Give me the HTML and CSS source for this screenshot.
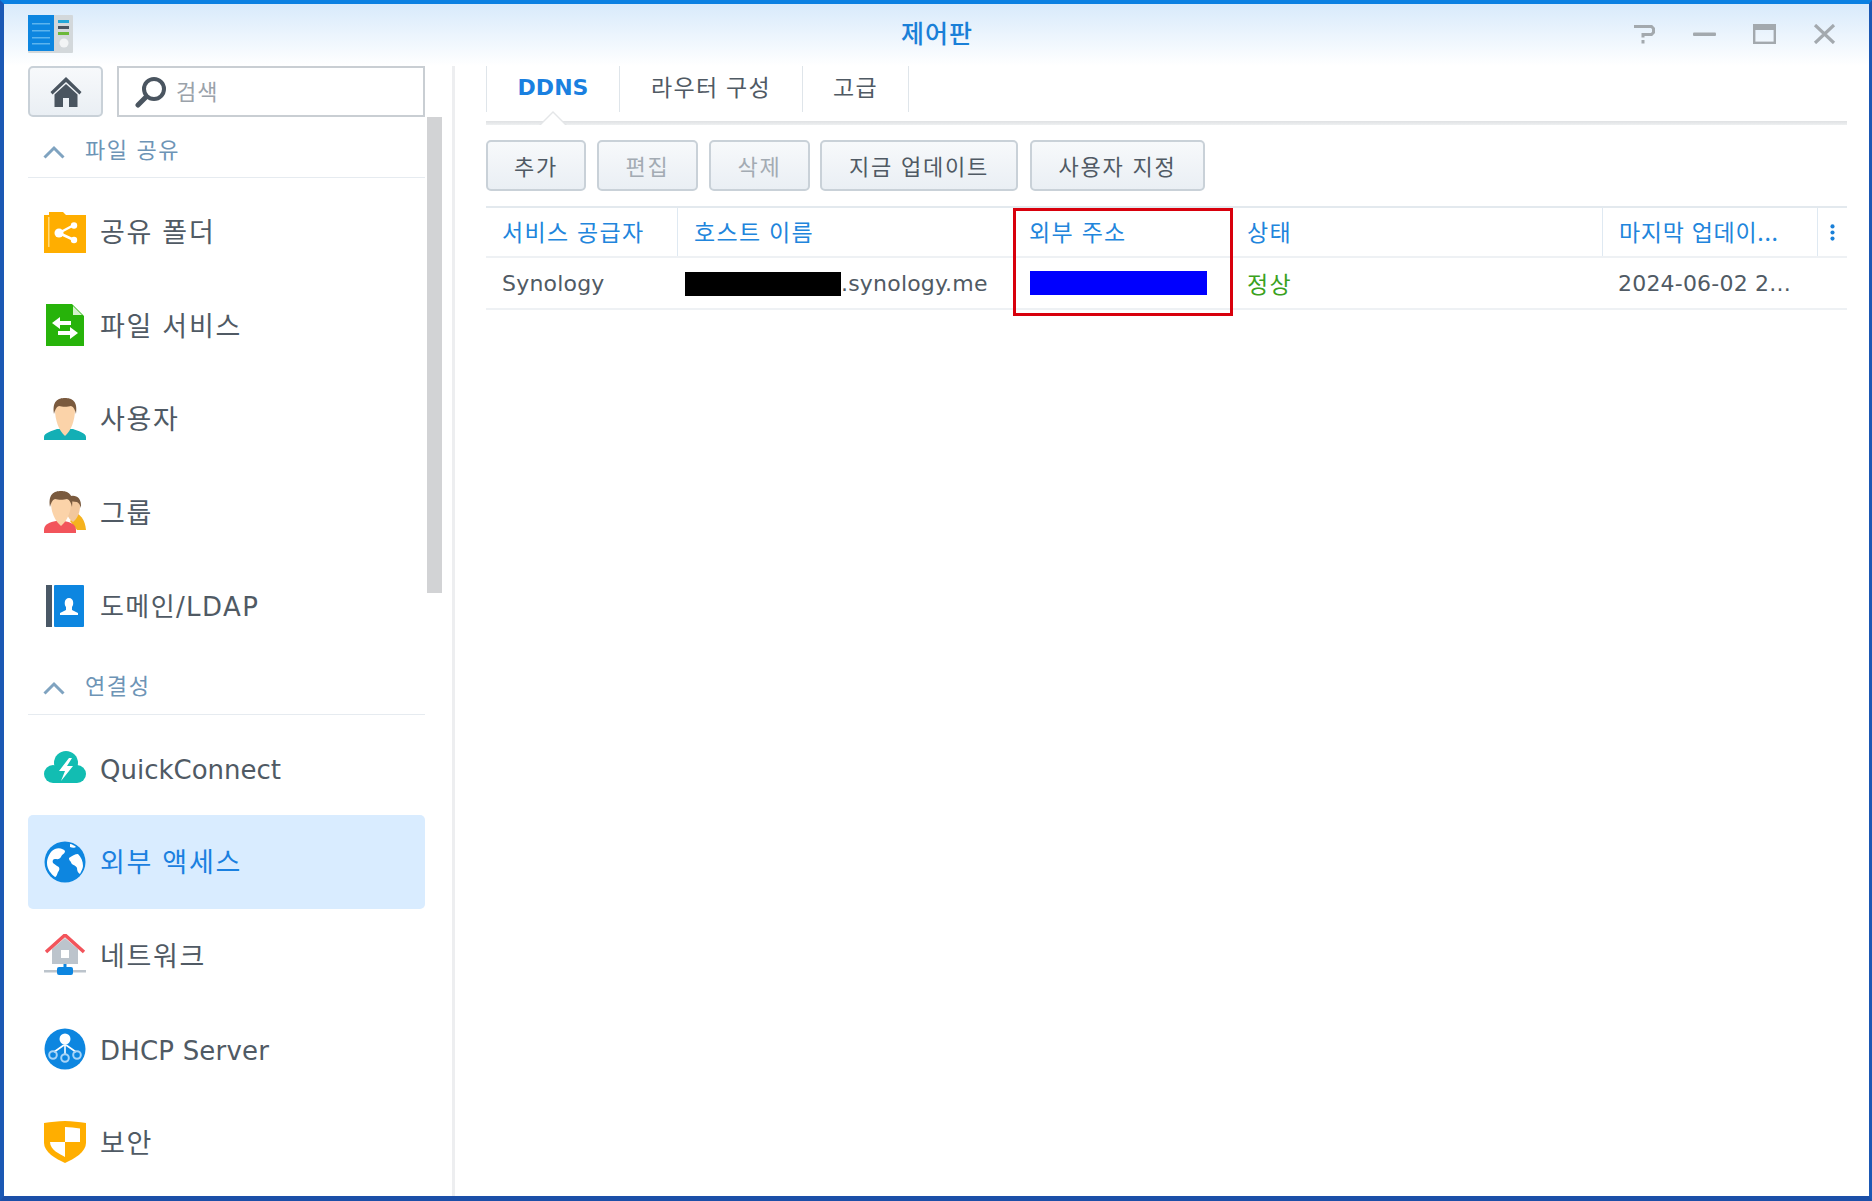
FILE: index.html
```html
<!DOCTYPE html>
<html lang="ko">
<head>
<meta charset="utf-8">
<title>제어판</title>
<link rel="stylesheet" href="styles.css">
</head>
<body>
<div class="window">
  <header class="titlebar">
    <svg class="app-icon" viewBox="0 0 45 38"><rect x="0" y="0" width="45" height="38" rx="1" fill="#d3d8db"/><rect x="0" y="0" width="26" height="36" fill="#0d86e0"/><g fill="#5cb4ee"><rect x="4" y="8" width="18" height="1.500"/><rect x="4" y="15" width="18" height="1.500"/><rect x="4" y="22" width="18" height="1.500"/><rect x="4" y="28" width="18" height="1.500"/></g><rect x="30" y="5" width="11" height="3" fill="#22a6d8"/><rect x="30" y="11" width="11" height="3" fill="#4a5560"/><rect x="30" y="17" width="11" height="3" fill="#6cb83a"/><circle cx="36" cy="28" r="4.500" fill="#f2f4f5"/></svg>
    <h1 class="title">제어판</h1>
    <div class="controls">
      <svg class="ctl" viewBox="0 0 23 20"><path d="M1 2.500h17.500l2 2v4l-2 2H10v3" fill="none" stroke="#a3a9ae" stroke-width="3"/><rect x="8.500" y="16" width="3" height="3.500" fill="#a3a9ae"/></svg>
      <svg class="ctl" viewBox="0 0 23 20"><rect x="0" y="8.500" width="23" height="3.500" rx="1" fill="#a3a9ae"/></svg>
      <svg class="ctl" viewBox="0 0 23 20"><rect x="1.200" y="1.200" width="20.600" height="17.600" fill="none" stroke="#a3a9ae" stroke-width="2.400"/><rect x="1" y="1" width="21" height="5" fill="#a3a9ae"/></svg>
      <svg class="ctl" viewBox="0 0 23 20"><path d="M2 1l19 18M21 1L2 19" fill="none" stroke="#a3a9ae" stroke-width="3.200"/></svg>
    </div>
  </header>
  <div class="body">
    <aside class="sidebar">
      <div class="search-row">
        <button class="btn home-btn"><svg viewBox="0 0 32 32" class="home-icon"><path d="M16 1L0.500 16l2 2.500L16 6l13.500 12.500 2-2.500z" fill="#4a5560"/><path d="M4.500 18.500L16 8l11.500 10.500V31H19v-9h-6v9H4.500z" fill="#4a5560"/></svg></button>
        <div class="search"><svg viewBox="0 0 32 32" class="search-icon"><circle cx="19" cy="13" r="10" fill="none" stroke="#4a5560" stroke-width="4"/><path d="M11 21L3 29" stroke="#4a5560" stroke-width="5" stroke-linecap="round"/></svg><span class="placeholder">검색</span></div>
      </div>
      <div class="scrollbar"></div>
      <div class="section"><svg class="chev" viewBox="0 0 22 14"><path d="M1.500 12.500L11 3l9.500 9.500" fill="none" stroke="#7fa3c0" stroke-width="3"/></svg><span class="section-label">파일 공유</span></div>
      <ul class="nav">
        <li class="item"><svg class="ico" viewBox="0 0 42 42"><path d="M0 4h5V1h14l3 3h20v38H0z" fill="#ffae00"/><rect x="4" y="6" width="1.500" height="30" fill="#ffd97a"/><path d="M15 22L30 14M15 22l15 7" stroke="#fff" stroke-width="2.500"/><circle cx="15" cy="22" r="4.500" fill="#fff"/><circle cx="30" cy="14.500" r="3.200" fill="#fff"/><circle cx="30" cy="29" r="3.200" fill="#fff"/></svg><span class="label">공유 폴더</span></li>
        <li class="item"><svg class="ico" viewBox="0 0 42 42"><path d="M2 0h26l12 12v30H2z" fill="#27b30a"/><path d="M29 2l9 9h-9z" fill="#d5f2cd"/><path d="M8 19l8-6v4h11v4H16v4zM34 29l-8 6v-4H14v-4h12v-4z" fill="#fff"/></svg><span class="label">파일 서비스</span></li>
        <li class="item"><svg class="ico" viewBox="0 0 42 42"><path d="M0 42v-3c0-4 8-6 13-8h16c5 2 13 4 13 8v3z" fill="#13afb5"/><path d="M11 12c0-15 20-15 20 0 0 10-4 21-10 26-6-5-10-16-10-26z" fill="#fbd3a9"/><path d="M10 16C8 3 14 0 21 0s13 3 11 16c-1-4-2-7-5-8-3 1-9 1-12 0-3 1-4 4-5 8z" fill="#7a5a3e"/></svg><span class="label">사용자</span></li>
        <li class="item"><svg class="ico" viewBox="0 0 42 42"><path d="M26 30l8-7c3 2 7 6 8 16h-9z" fill="#f5b21e"/><path d="M24 8c6-3 12 0 12 7 0 7-3 13-7 16-3-2-5-5-6-8z" fill="#f2c79c"/><path d="M24 6c6-3 14-1 13 11-1-3-2-5-4-6-3 0-6-1-8-1z" fill="#7a5a3e"/><path d="M0 42v-3c0-6 6-8 12-9h8c6 1 12 3 12 9v3z" fill="#f2545b"/><path d="M7 12c0-15 20-15 20 0 0 9-4 18-10 23C11 30 7 21 7 12z" fill="#fbd3a9"/><path d="M6 16C4 3 10 0 17 0s13 3 11 16c-1-4-2-7-5-8-3 1-9 1-12 0-3 1-4 4-5 8z" fill="#7a5a3e"/></svg><span class="label">그룹</span></li>
        <li class="item"><svg class="ico" viewBox="0 0 42 42"><rect x="2" y="0" width="6" height="42" fill="#4a5866"/><rect x="10" y="0" width="30" height="42" rx="1" fill="#0d86e0"/><path d="M16 30v-2l6-3v-3c-2-2-2-9 3-9s5 7 3 9v3l6 3v2z" fill="#fff"/></svg><span class="label label-mixed">도메인/LDAP</span></li>
      </ul>
      <div class="section section-next"><svg class="chev" viewBox="0 0 22 14"><path d="M1.500 12.500L11 3l9.500 9.500" fill="none" stroke="#7fa3c0" stroke-width="3"/></svg><span class="section-label">연결성</span></div>
      <ul class="nav">
        <li class="item"><svg class="ico" viewBox="0 0 42 42"><g fill="#12bdb2"><circle cx="22" cy="16" r="12"/><circle cx="9" cy="27" r="9"/><circle cx="33" cy="27" r="9"/><rect x="9" y="20" width="24" height="16"/></g><path d="M25 11l-10 13h6l-4 10 12-15h-6l5-8z" fill="#fff"/></svg><span class="label label-latin">QuickConnect</span></li>
        <li class="item active"><svg class="ico" viewBox="0 0 42 42"><circle cx="21" cy="21" r="20.500" fill="#0d86e0"/><path d="M3 22c0-5 3-12 8-14 4-2 9 0 10 2 0 3-3 3-4 6-2 3-4 2-6 2s-3 2-2 4l4 3c3 1 3 4 1 6-1 3-2 5-3 5-4-3-8-8-8-14zM25 17c3-2 6-4 9-4 3 3 5 7 5 12 0 3-2 5-3 8-2-1-3-3-3-6-1-3-6-3-6-6-2-2-2-3-2-4zM26 3c2 0 5 2 6 3-1 1-4 1-6 0z" fill="#fff"/></svg><span class="label">외부 액세스</span></li>
        <li class="item"><svg class="ico" viewBox="0 0 42 42"><path d="M8 15L21 4l13 11v15H8z" fill="#bcc4cc"/><path d="M2 18L21 1l19 17" fill="none" stroke="#f2545b" stroke-width="3.500"/><rect x="17" y="16" width="8" height="8" fill="#fff"/><rect x="0" y="36" width="42" height="2.500" fill="#bcc4cc"/><rect x="19.500" y="30" width="3" height="5" fill="#0d86e0"/><rect x="13" y="33" width="16" height="8" rx="2" fill="#0d86e0"/></svg><span class="label">네트워크</span></li>
        <li class="item"><svg class="ico" viewBox="0 0 42 42"><circle cx="21" cy="21" r="20.500" fill="#0d86e0"/><circle cx="21" cy="11" r="5.500" fill="#fff"/><path d="M21 14v12M20 17L10 24M22 17l10 7" stroke="#fff" stroke-width="1.600"/><g fill="none" stroke="#a7d4f7" stroke-width="2"><circle cx="9" cy="27" r="3.800"/><circle cx="21" cy="30" r="3.800"/><circle cx="33" cy="27" r="3.800"/></g></svg><span class="label label-latin label-wide">DHCP Server</span></li>
        <li class="item"><svg class="ico" viewBox="0 0 42 42"><path d="M21 0c7 0 14 1 21 2v20c0 9-12 16-21 20C12 38 0 31 0 22V2C7 1 14 0 21 0z" fill="#ffae00"/><path d="M21 6c5 0 10 1 15 1.500V21H21zM21 21v15c-5-3-15-7-15-15z" fill="#fff"/></svg><span class="label">보안</span></li>
      </ul>
    </aside>
    <main class="main">
      <nav class="tabs">
        <span class="tab tab-on">DDNS</span>
        <span class="tab tab-ko tab-router">라우터 구성</span>
        <span class="tab tab-ko tab-adv">고급</span>
      </nav>
      <div class="toolbar">
        <button class="btn tool w-add">추가</button>
        <button class="btn tool w-add2 off">편집</button>
        <button class="btn tool w-add2 off">삭제</button>
        <button class="btn tool w-now">지금 업데이트</button>
        <button class="btn tool w-cust">사용자 지정</button>
      </div>
      <div class="table">
        <div class="row head">
          <div class="cell">서비스 공급자</div>
          <div class="cell sep">호스트 이름</div>
          <div class="cell col-addr">외부 주소</div>
          <div class="cell col-state">상태</div>
          <div class="cell sep col-last">마지막 업데이...</div>
          <div class="cell sep dots"><svg class="dots-icon" viewBox="0 0 4 14"><circle cx="2" cy="2" r="1.700"/><circle cx="2" cy="7" r="1.700"/><circle cx="2" cy="12" r="1.700"/></svg></div>
        </div>
        <div class="row data">
          <div class="cell latin">Synology</div>
          <div class="cell latin host"><span class="mask-black"></span>.synology.me</div>
          <div class="cell"><span class="mask-blue"></span></div>
          <div class="cell col-state ok">정상</div>
          <div class="cell latin">2024-06-02 2...</div>
          <div class="cell"></div>
        </div>
        <div class="redbox"></div>
      </div>
    </main>
  </div>
</div>
</body>
</html>
```
FILE: styles.css
```css
* { box-sizing: border-box; }
html, body { margin: 0; padding: 0; background: #fff; }
body { width: 1872px; height: 1201px; overflow: hidden; font-family: "DejaVu Sans", "Noto Sans CJK KR", sans-serif; color: #505a64; }
.window { width: 1872px; height: 1201px; display: flex; flex-direction: column; overflow: hidden; border-top: 4px solid #0a80e2; border-left: 4px solid #1b58b4; border-right: 3px solid #1b58b4; border-bottom: 5px solid #1b4fa8; background: #fff; }
.titlebar { height: 62px; flex: none; display: flex; align-items: flex-start; padding: 11px 33px 0 24px; background: linear-gradient(#d8eafb, #fff); }
.app-icon { width: 45px; height: 38px; flex: none; }
.title { flex: 1; margin: 0; text-align: center; font: 500 25px/34px "Noto Sans CJK KR", sans-serif; letter-spacing: 1px; color: #1a80d8; padding-left: 168px; }
.controls { display: flex; gap: 37px; padding-top: 9px; flex: none; }
.ctl { width: 23px; height: 20px; display: block; }
.body { flex: 1; display: flex; min-height: 0; }
.sidebar { position: relative; width: 451px; flex: none; padding-left: 24px; padding-right: 27px; border-right: 3px solid #edeef0; overflow: hidden; }
.search-row { display: flex; gap: 14px; height: 51px; }
.btn { border: 2px solid #c9d1d8; border-radius: 5px; background: linear-gradient(#f7f9fb, #eaeff4); font-family: inherit; padding: 0; }
.home-btn { width: 75px; height: 51px; display: flex; align-items: center; justify-content: center; }
.home-icon { width: 32px; height: 32px; }
.search { flex: 1; display: flex; align-items: center; border: 2px solid #c9ced3; padding-left: 16px; gap: 9px; background: #fff; }
.search-icon { width: 32px; height: 32px; }
.placeholder { font: 400 22px/1 "Noto Sans CJK KR", sans-serif; letter-spacing: 1px; color: #9aa2aa; padding-bottom: 4px; }
.scrollbar { position: absolute; left: 423px; top: 51px; width: 15px; height: 476px; background: #d2d3d5; }
.section { display: flex; align-items: center; height: 61px; padding: 6px 0 0 15px; border-bottom: 1px solid #e6ebf0; gap: 20px; }
.section-next { height: 62px; }
.chev { width: 22px; height: 14px; flex: none; margin-top: 4px; }
.section-label { font: 400 22px/1 "Noto Sans CJK KR", sans-serif; letter-spacing: 1.600px; color: #6d94b6; padding-bottom: 4px; }
.nav { list-style: none; margin: 0; padding: 7px 0 0; }
.item { height: 93.500px; display: flex; align-items: center; padding-left: 16px; gap: 14px; border-radius: 5px; }
.ico { width: 42px; height: 42px; flex: none; }
.label { font: 400 27px/1 "Noto Sans CJK KR", sans-serif; letter-spacing: 1.700px; color: #505a64; padding-bottom: 2px; }
.label-mixed { font-family: "DejaVu Sans", "Noto Sans CJK KR", sans-serif; font-size: 26px; letter-spacing: 1.400px; padding-bottom: 0; padding-top: 2px; }
.label-latin { font-family: "DejaVu Sans", sans-serif; font-size: 26px; letter-spacing: 0; padding-bottom: 0; padding-top: 3px; }
.label-wide { letter-spacing: .2px; padding-top: 4px; }
.active { background: #d9ecff; }
.active .label { color: #1a80e0; }
.main { flex: 1; min-width: 0; padding: 0 22px 0 31px; }
.tabs { display: flex; height: 60px; position: relative; }
.tabs::after { content: ""; position: absolute; left: 0; right: 0; top: 55px; height: 4px; background: linear-gradient(#dfe1e3, #eef0f1); }
.tab { height: 46px; display: flex; align-items: center; justify-content: center; padding-bottom: 4px; border-right: 1px solid #dfe5ea; font-size: 22px; }
.tab-on { position: relative; width: 134px; border-left: 1px solid #dfe5ea; font-weight: 700; color: #1a80e0; }
.tab-on::before { content: ""; position: absolute; z-index: 1; left: 52px; top: 45px; width: 28px; height: 14px; background: #e4e6e8; clip-path: polygon(50% 0, 100% 100%, 0 100%); }
.tab-on::after { content: ""; position: absolute; z-index: 2; left: 52px; top: 47px; width: 28px; height: 14px; background: #fff; clip-path: polygon(50% 0, 100% 100%, 0 100%); }
.tab-ko { font: 400 23px/1 "Noto Sans CJK KR", sans-serif; letter-spacing: 1.300px; color: #505a64; padding-bottom: 6px; }
.tab-router { width: 183px; }
.tab-adv { width: 106px; }
.toolbar { display: flex; gap: 11px; padding-top: 14px; height: 72px; }
.tool { height: 51px; font: 400 22px/1 "Noto Sans CJK KR", sans-serif; letter-spacing: 1.800px; color: #505a64; padding-bottom: 2px; }
.off { color: #a3abb3; }
.w-add { width: 100px; }
.w-add2 { width: 101px; }
.w-now { width: 198px; margin-left: -1px; }
.w-cust { width: 175px; margin-left: 1px; }
.table { position: relative; border-top: 2px solid #e3e9ee; margin-top: 8px; }
.row { display: grid; grid-template-columns: 191px 337px 219px 369px 215px 29px; }
.head { height: 50px; border-bottom: 2px solid #eef1f4; }
.data { height: 52px; border-bottom: 2px solid #eef1f4; }
.cell { display: flex; align-items: center; padding-left: 16px; font: 400 23px/1 "Noto Sans CJK KR", sans-serif; letter-spacing: 1.300px; white-space: nowrap; }
.head .cell { color: #2185dc; padding-bottom: 2px; }
.sep { border-left: 1px solid #dfe9f2; }
.col-addr { padding-left: 15px; }
.col-state { padding-left: 14px; }
.col-last { letter-spacing: .7px; }
.latin { font-family: "DejaVu Sans", sans-serif; font-size: 22px; letter-spacing: .2px; color: #505a64; padding-top: 1px; }
.host { padding-left: 8px; }
.ok { color: #3ba11d; }
.head .dots { padding-left: 12px; padding-bottom: 0; }
.dots-icon { width: 5px; height: 17px; fill: #1a80d8; }
.mask-black { display: inline-block; width: 156px; height: 24px; background: #000; flex: none; }
.mask-blue { display: inline-block; width: 177px; height: 24px; background: #00f; flex: none; }
.redbox { position: absolute; left: 527px; top: 0; width: 220px; height: 108px; border: 3px solid #d8000c; }
```
